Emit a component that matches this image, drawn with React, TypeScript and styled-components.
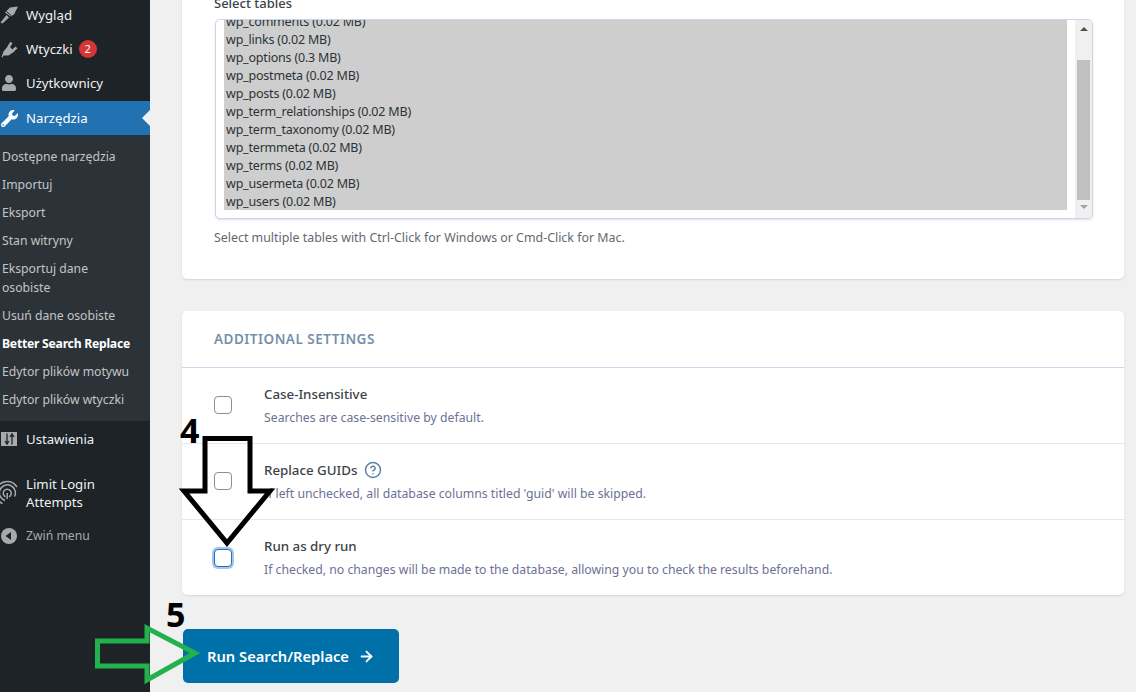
import React from 'react';
import styled, {createGlobalStyle} from "styled-components";
import {FaUser, FaWrench} from "react-icons/fa";
import {FiHelpCircle, FiArrowRight} from "react-icons/fi";

const uiFont = `"Noto Sans", "Open Sans", sans-serif`;

const GlobalStyle = createGlobalStyle`
  html, body {
    margin: 0;
    padding: 0;
    height: 692px;
    overflow: hidden;
    background: #f0f0f0;
    font-family: ${uiFont};
  }
  * { box-sizing: border-box; }
`

const tables = [
    "wp_comments (0.02 MB)",
    "wp_links (0.02 MB)",
    "wp_options (0.3 MB)",
    "wp_postmeta (0.02 MB)",
    "wp_posts (0.02 MB)",
    "wp_term_relationships (0.02 MB)",
    "wp_term_taxonomy (0.02 MB)",
    "wp_termmeta (0.02 MB)",
    "wp_terms (0.02 MB)",
    "wp_usermeta (0.02 MB)",
    "wp_users (0.02 MB)",
];

const subItems = [
    "Dostępne narzędzia",
    "Importuj",
    "Eksport",
    "Stan witryny",
    "Eksportuj dane osobiste",
    "Usuń dane osobiste",
    "Better Search Replace",
    "Edytor plików motywu",
    "Edytor plików wtyczki",
];

const BrushIcon = () => (
    <svg width="18" height="18" viewBox="0 0 18 18" fill="#a7aaad">
        <path d="M0.500 16.500 6.500 9l2.500 2.500-6.500 6z"/>
        <path d="M5 6.500 10 1.500 18 0.500 14 8.500 10.500 10.500z"/>
        <path d="M6.500 5.500 11.500 10" stroke="#1d2327" strokeWidth="1"/>
    </svg>
);

const PlugIcon = () => (
    <svg width="18" height="18" viewBox="0 0 18 18" fill="#a7aaad">
        <path d="M1.500 17 3.500 11.500 8.500 5.500 14.500 11.500 8.500 15.500 3.500 15.500 2.500 17.500z"/>
        <path d="M8.500 7 11.500 2.500M12.500 11 16.500 7.500" stroke="#a7aaad" strokeWidth="2.500"/>
    </svg>
);

const SlidersIcon = () => (
    <svg width="16" height="14" viewBox="0 0 16 14">
        <rect x="0" y="0" width="16" height="14" fill="#a7aaad"/>
        <path d="M6 1.500v10M4 9l2 3 2-3M11 2.500v10M9 5l2-3 2 3" stroke="#1d2327" strokeWidth="1.300" fill="none"/>
    </svg>
);

const FingerprintIcon = () => (
    <svg width="18" height="26" viewBox="0 0 18 26" fill="none" stroke="#a7aaad" strokeWidth="1.500">
        <path d="M5 20.500A8 8 0 1 1 14.500 16.500"/>
        <path d="M2.500 23.500A11.500 11.500 0 0 1 7 1.500 11.500 11.500 0 0 1 17 7"/>
        <path d="M5.500 16.800A4 4 0 1 1 9 16.800"/>
        <path d="M7.200 13v6"/>
    </svg>
);

const CollapseIcon = () => (
    <svg width="16" height="16" viewBox="0 0 16 16">
        <circle cx="8" cy="8" r="8" fill="#a7aaad"/>
        <path d="M10 4v8L4.500 8z" fill="#1d2327"/>
    </svg>
);

const Annotations = () => (
    <>
        <Number $left={180} $top={410}>4</Number>
        <Number $left={166} $top={594}>5</Number>
        <ArrowLayer width="1136" height="692" viewBox="0 0 1136 692">
            <polygon points="205,438.500 250,438.500 250,491 270,491 227,543 184,491 205,491" fill="none" stroke="#000" strokeWidth="5"/>
            <polygon points="97.500,641 147,641 147,628 195,653 147,680 147,666 97.500,666" fill="none" stroke="#22b14c" strokeWidth="5"/>
        </ArrowLayer>
    </>
);

export default function App() {
    return (
        <Shell>
            <GlobalStyle/>
            <Sidebar>
                <Menu>
                    <MenuItem><IconSlot><BrushIcon/></IconSlot>Wygląd</MenuItem>
                    <MenuItem><IconSlot><PlugIcon/></IconSlot>Wtyczki<Badge>2</Badge></MenuItem>
                    <MenuItem><IconSlot><FaUser size={16}/></IconSlot>Użytkownicy</MenuItem>
                    <ActiveItem><IconSlot $active><FaWrench size={17}/></IconSlot>Narzędzia</ActiveItem>
                    <SubMenu>
                        {subItems.map(item => (
                            <SubItem key={item} $current={item === "Better Search Replace"}>{item}</SubItem>
                        ))}
                    </SubMenu>
                    <MenuItem><IconSlot><SlidersIcon/></IconSlot>Ustawienia</MenuItem>
                    <TallItem><IconSlot><FingerprintIcon/></IconSlot>Limit Login Attempts</TallItem>
                    <CollapseItem><IconSlot><CollapseIcon/></IconSlot>Zwiń menu</CollapseItem>
                </Menu>
            </Sidebar>
            <Main>
                <Card>
                    <TablesBody>
                        <FieldLabel>Select tables</FieldLabel>
                        <TableSelect>
                            <OptionList>
                                {tables.map(name => <OptionRow key={name}>{name}</OptionRow>)}
                            </OptionList>
                            <ScrollBar>
                                <ArrowUp/>
                                <Thumb/>
                                <ArrowDown/>
                            </ScrollBar>
                        </TableSelect>
                        <HelpText>Select multiple tables with Ctrl-Click for Windows or Cmd-Click for Mac.</HelpText>
                    </TablesBody>
                </Card>
                <SettingsCard>
                    <CardHeader>ADDITIONAL SETTINGS</CardHeader>
                    <SettingRow>
                        <Check type="checkbox"/>
                        <div>
                            <SettingTitle>Case-Insensitive</SettingTitle>
                            <SettingText>Searches are case-sensitive by default.</SettingText>
                        </div>
                    </SettingRow>
                    <SettingRow>
                        <Check type="checkbox"/>
                        <div>
                            <SettingTitle>Replace GUIDs <FiHelpCircle size={18} color="#5b82a0"/></SettingTitle>
                            <SettingText>If left unchecked, all database columns titled 'guid' will be skipped.</SettingText>
                        </div>
                    </SettingRow>
                    <SettingRow>
                        <Check type="checkbox" $focused/>
                        <div>
                            <SettingTitle>Run as dry run</SettingTitle>
                            <SettingText>If checked, no changes will be made to the database, allowing you to check the results beforehand.</SettingText>
                        </div>
                    </SettingRow>
                </SettingsCard>
                <RunButton>Run Search/Replace <FiArrowRight size={17} strokeWidth={2.500}/></RunButton>
            </Main>
            <Annotations/>
        </Shell>
    );
}

const Shell = styled.div`
  position: relative;
  display: flex;
  width: 1136px;
  height: 692px;
  overflow: hidden;
  background: #f0f0f0;
`
const Sidebar = styled.aside`
  flex: 0 0 150px;
  background: #1d2327;
  color: #f0f0f1;
`
const Menu = styled.nav`
  margin-top: -2px;
`
const MenuItem = styled.div`
  position: relative;
  display: flex;
  align-items: center;
  height: 34px;
  padding-left: 26px;
  font-size: 13.200px;
  line-height: 18px;
  color: #f0f0f1;
`
const ActiveItem = styled(MenuItem)`
  margin-top: 1px;
  background: #2271b1;
  color: #fff;

  &::after {
    content: "";
    position: absolute;
    right: 0;
    top: 50%;
    margin-top: -8px;
    border: 8px solid transparent;
    border-left-width: 0;
    border-right-color: #f0f0f0;
  }
`
const TallItem = styled(MenuItem)`
  height: 50px;
  margin-top: 12px;
  padding-right: 30px;
`
const CollapseItem = styled(MenuItem)`
  margin-top: 1px;
  font-size: 12.200px;
  color: #a7aaad;
`
const IconSlot = styled.span<{ $active?: boolean }>`
  position: absolute;
  left: 0;
  top: 0;
  bottom: 0;
  width: 18px;
  display: flex;
  align-items: center;
  justify-content: center;
  color: ${props => props.$active ? "#fff" : "#a7aaad"};
`
const Badge = styled.span`
  display: inline-flex;
  align-items: center;
  justify-content: center;
  width: 18px;
  height: 18px;
  margin-left: 6px;
  border-radius: 50%;
  background: #d63638;
  color: #fff;
  font-size: 11px;
`
const SubMenu = styled.div`
  background: #2c3338;
  padding: 7px 0 8px;
  margin-bottom: 1px;
`
const SubItem = styled.div<{ $current?: boolean }>`
  padding: 4.500px 16px 4.500px 2px;
  font-size: 12.200px;
  line-height: 19px;
  color: ${props => props.$current ? "#fff" : "#c3c4c7"};
  font-weight: ${props => props.$current ? 700 : 400};
  letter-spacing: ${props => props.$current ? "-0.25px" : "0"};
`
const Main = styled.main`
  flex: 1;
  min-width: 0;
  padding: 0 12px 0 32px;
`
const Card = styled.section`
  margin-top: -38px;
  background: #fff;
  border-radius: 5px;
  box-shadow: 0 1px 2px rgba(120, 140, 170, 0.25);
`
const TablesBody = styled.div`
  padding: 32px 31px 32px 33px;
`
const FieldLabel = styled.div`
  margin-left: -1px;
  font-size: 13px;
  font-weight: 500;
  line-height: 18px;
  color: #3c434a;
`
const TableSelect = styled.div`
  display: flex;
  height: 200px;
  margin-top: 7px;
  padding-left: 8px;
  overflow: hidden;
  background: #fff;
  border: 1px solid #c9d7e8;
  border-radius: 5px;
  box-shadow: 0 1px 2px rgba(120, 140, 170, 0.25);
`
const OptionList = styled.div`
  flex: 1;
  margin-top: -8px;
  margin-right: 8px;
`
const OptionRow = styled.div`
  height: 18px;
  padding-left: 2px;
  background: #cecece;
  font-size: 12.500px;
  letter-spacing: -0.200px;
  line-height: 20px;
  color: #2c3338;
`
const ScrollBar = styled.div`
  flex: 0 0 17px;
  display: flex;
  flex-direction: column;
  align-items: center;
  background: #f0f0f0;
`
const ArrowUp = styled.span`
  margin-top: 7px;
  border: 4px solid transparent;
  border-top-width: 0;
  border-bottom: 4px solid #505050;
`
const Thumb = styled.span`
  width: 13px;
  height: 140px;
  margin-top: 29px;
  background: #c0c0c0;
`
const ArrowDown = styled.span`
  margin-top: 5px;
  border: 4px solid transparent;
  border-bottom-width: 0;
  border-top: 4px solid #a3a3a3;
`
const HelpText = styled.p`
  margin: 10px 0 0 -1px;
  font-size: 12.400px;
  line-height: 18px;
  color: #646970;
`
const SettingsCard = styled(Card)`
  margin-top: 32px;
`
const CardHeader = styled.h3`
  margin: 0;
  height: 57px;
  padding: 0 32px;
  display: flex;
  align-items: center;
  border-bottom: 1px solid #c9d7e8;
  font-size: 13.500px;
  font-weight: 600;
  letter-spacing: 0.500px;
  color: #7590ab;
`
const SettingRow = styled.div`
  display: flex;
  align-items: center;
  gap: 32px;
  height: 76px;
  padding: 0 32px;
  border-bottom: 1px solid #e6e8f0;

  &:last-child {
    height: 75px;
    border-bottom: 0;
  }
`
const Check = styled.input<{ $focused?: boolean }>`
  appearance: none;
  flex: 0 0 18px;
  width: 18px;
  height: 18px;
  margin: ${props => props.$focused ? "0" : "-2px 0 0"};
  background: #fff;
  border: 1px solid ${props => props.$focused ? "#2271b1" : "#8c8f94"};
  border-radius: 4px;
  box-shadow: ${props => props.$focused ? "0 0 0 2px #a5c5ef" : "none"};
`
const SettingTitle = styled.div`
  display: flex;
  align-items: center;
  gap: 7px;
  height: 18px;
  font-size: 13.300px;
  font-weight: 500;
  line-height: 18px;
  color: #3c434a;
`
const SettingText = styled.div`
  margin-top: 6px;
  font-size: 12.250px;
  line-height: 18px;
  color: #6c7195;
`
const RunButton = styled.button`
  display: flex;
  align-items: center;
  justify-content: center;
  gap: 9px;
  width: 216px;
  height: 54px;
  margin: 34px 0 0 1px;
  padding: 0;
  border: 0;
  border-radius: 5px;
  background: #0071a8;
  color: #fff;
  font-family: ${uiFont};
  font-size: 14.700px;
  font-weight: 600;
`
const Number = styled.span<{ $left: number; $top: number }>`
  position: absolute;
  left: ${props => props.$left}px;
  top: ${props => props.$top}px;
  font-family: "Open Sans", sans-serif;
  font-size: 34px;
  font-weight: 700;
  line-height: 40px;
  color: #000;
`
const ArrowLayer = styled.svg`
  position: absolute;
  left: 0;
  top: 0;
  pointer-events: none;
`
